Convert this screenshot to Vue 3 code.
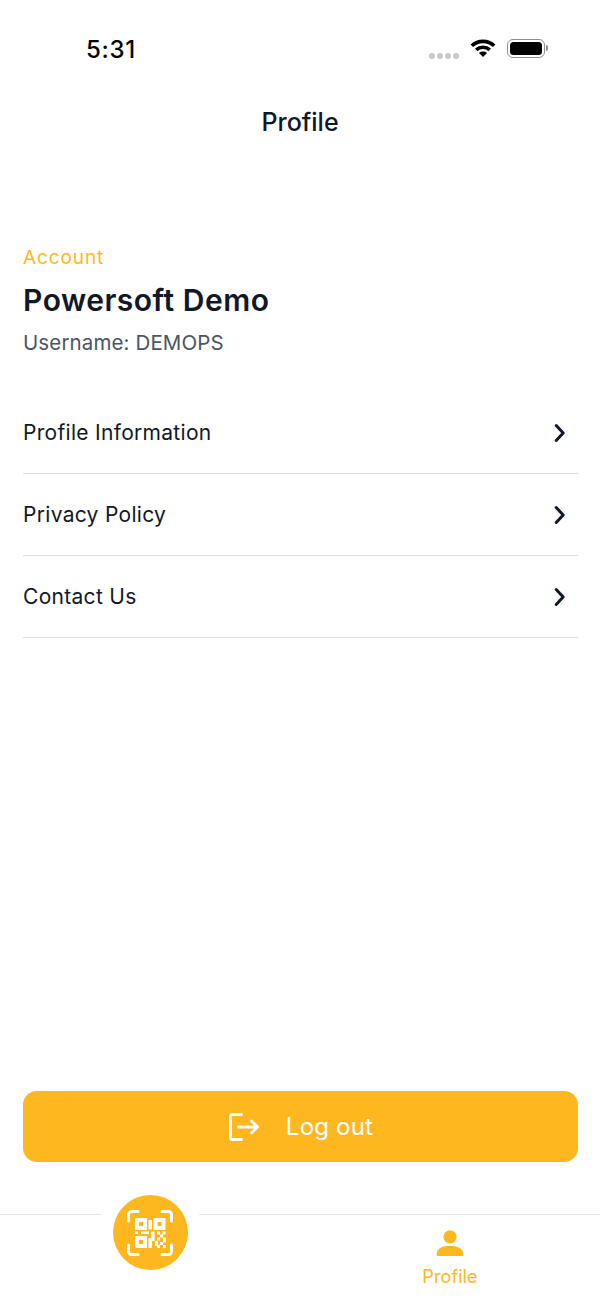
<script setup>
const rows = ['Profile Information', 'Privacy Policy', 'Contact Us']
const dots = [0, 1, 2, 3]
</script>

<template>
  <div class="screen">
    <header class="status">
      <span class="time">5:31</span>
      <div class="status-icons">
        <div class="signal"><i v-for="d in dots" :key="d"></i></div>
        <svg class="wifi" width="26" height="18" viewBox="0 0 26 18">
          <path d="M1.800 6.800C8 .9 18 .9 24.200 6.800" fill="none" stroke="#000" stroke-width="3.600" />
          <path d="M6.200 10.800C10 7.400 16 7.400 19.800 10.800" fill="none" stroke="#000" stroke-width="3.600" />
          <path d="M13 18 9 13.900C11.200 12 14.800 12 17 13.900Z" fill="#000" />
        </svg>
        <div class="battery"><div class="cell"></div></div>
        <div class="nub"></div>
      </div>
    </header>

    <h1 class="title">Profile</h1>

    <section class="account">
      <div class="eyebrow">Account</div>
      <div class="name">Powersoft Demo</div>
      <div class="username">Username: DEMOPS</div>
    </section>

    <nav class="menu">
      <div v-for="r in rows" :key="r" class="row">
        <span class="row-label">{{ r }}</span>
        <svg width="14" height="20" viewBox="0 0 14 20">
          <path d="M3.200 2.500 10.200 10 3.200 17.500" fill="none" stroke="#111827" stroke-width="3" stroke-linecap="round" stroke-linejoin="round" />
        </svg>
      </div>
    </nav>

    <div class="spacer"></div>

    <button class="logout">
      <svg width="30" height="28" viewBox="0 0 30 28">
        <path d="M12.500 1.500H3A1.500 1.500 0 0 0 1.500 3V25A1.500 1.500 0 0 0 3 26.500H12.500" fill="none" stroke="#fff" stroke-width="2.800" stroke-linecap="round" stroke-linejoin="round" />
        <path d="M9.500 14H28M22.500 8 28.500 14 22.500 20" fill="none" stroke="#fff" stroke-width="2.800" stroke-linecap="round" stroke-linejoin="round" />
      </svg>
      <span>Log out</span>
    </button>

    <footer class="tabbar">
      <div class="tab">
        <div class="scan">
          <svg width="46" height="46" viewBox="0 0 46 46">
            <path d="M1.500 11V4.500A3 3 0 0 1 4.500 1.500H11M35 1.500H41.500A3 3 0 0 1 44.500 4.500V11M44.500 35V41.500A3 3 0 0 1 41.500 44.500H35M11 44.500H4.500A3 3 0 0 1 1.500 41.500V35" fill="none" stroke="#fff" stroke-width="3" stroke-linecap="round" />
            <path fill="#fff" fill-rule="evenodd" d="M8 8h12v12H8zM12 12v4h4v-4zM26.500 8h12v12h-12zM30.500 12v4h4v-4zM8 26h12v12H8zM12 30v4h4v-4z" />
            <path fill="#fff" d="M21.500 10h3.500v9.500h-3.500zM8 21.500h3v2.500H8zM14 21.500h8v2.500h-8zM24 21.500h3.500v7h-3.500zM30 21.500h3v3h-3zM35.500 21.500h3v3h-3zM21.500 28h6v3h-6zM33 24.500h3v3h-3zM30 27.500h3v3h-3zM36 27.500h3v5h-3zM21.500 31h3.500v7h-3.500zM28 31h3v5h-3zM33 32h3v3h-3zM36 35h3v3h-3zM30 35h3v3h-3z" />
          </svg>
        </div>
      </div>
      <div class="tab tab-profile">
        <svg width="28" height="26" viewBox="0 0 28 26">
          <circle cx="14" cy="6.800" r="6.600" fill="#FFB71F" />
          <path d="M.8 26V23.500C.8 18.500 7 15.800 14 15.800S27.200 18.500 27.200 23.500V26Z" fill="#FFB71F" />
        </svg>
        <span class="tab-label">Profile</span>
      </div>
    </footer>
  </div>
</template>

<style>
html, body { margin: 0; background: #fff; }
</style>

<style scoped>
.screen {
  width: 600px;
  height: 1304px;
  display: flex;
  flex-direction: column;
  background: #fff;
  font-family: Inter, "Noto Sans", sans-serif;
  color: #111827;
  overflow: hidden;
}
.status {
  height: 98px;
  flex: none;
  display: flex;
  justify-content: space-between;
  align-items: center;
  padding: 0 52px 0 86px;
  box-sizing: border-box;
}
.time { font-size: 24px; font-weight: 500; color: #000; letter-spacing: .7px; }
.status-icons { display: flex; align-items: center; }
.signal { display: flex; gap: 2px; margin: 13px 11px 0 0; }
.signal i { width: 6px; height: 6px; border-radius: 50%; background: #c8c8c8; }
.wifi { margin: -2px 11px 0 0; }
.battery {
  width: 38px; height: 19px; box-sizing: border-box;
  border: 1.500px solid #8e8e8e; border-radius: 6px; padding: 2px;
  margin-top: -2px;
}
.cell { height: 100%; background: #000; border-radius: 3.500px; }
.nub { width: 2px; height: 6px; background: #8e8e8e; border-radius: 0 2px 2px 0; margin: -2px 0 0 1px; }
.title {
  margin: 0;
  height: 48px;
  line-height: 48px;
  text-align: center;
  font-size: 25px;
  font-weight: 500;
  flex: none;
}
.account { margin-top: 97px; padding: 0 23px; flex: none; }
.eyebrow { font-size: 19px; line-height: 30px; color: #FFB71F; letter-spacing: .9px; }
.name { font-size: 30px; line-height: 44px; margin-top: 5px; font-weight: 600; letter-spacing: .5px; }
.username { font-size: 20.500px; line-height: 32px; margin-top: 5px; color: #4B5563; letter-spacing: .12px; }
.menu { margin-top: 33px; padding: 0 22px 0 23px; flex: none; }
.row {
  height: 82px;
  box-sizing: border-box;
  border-bottom: 1px solid #dcdfe3;
  display: flex;
  justify-content: space-between;
  align-items: center;
  padding-right: 11px;
}
.row-label { font-size: 21px; letter-spacing: .3px; }
.spacer { flex: 1; }
.logout {
  margin: 0 22px 52px 23px;
  height: 71px;
  flex: none;
  border: 0;
  border-radius: 14px;
  background: #FFB71F;
  color: #fff;
  font: 400 24px Inter, "Noto Sans", sans-serif;
  letter-spacing: .2px;
  display: flex;
  align-items: center;
  justify-content: center;
  gap: 27px;
  padding: 0 0 0 1px;
}
.tabbar {
  height: 90px;
  flex: none;
  border-top: 1px solid #e8e8e8;
  display: grid;
  grid-template-columns: 1fr 1fr;
  box-sizing: border-box;
}
.tab { display: flex; justify-content: center; position: relative; }
.scan {
  position: absolute;
  top: -20px;
  width: 75px; height: 75px;
  border-radius: 50%;
  background: #FFB71F;
  box-shadow: 0 0 0 15px #fff;
  clip-path: circle(52px at 50% 50%);
  display: flex; align-items: center; justify-content: center;
}
.tab-profile { flex-direction: column; justify-content: flex-start; align-items: center; padding-top: 15px; }
.tab-label { font-size: 18px; line-height: 26px; color: #FFB71F; margin-top: 8px; letter-spacing: .1px; }
</style>
